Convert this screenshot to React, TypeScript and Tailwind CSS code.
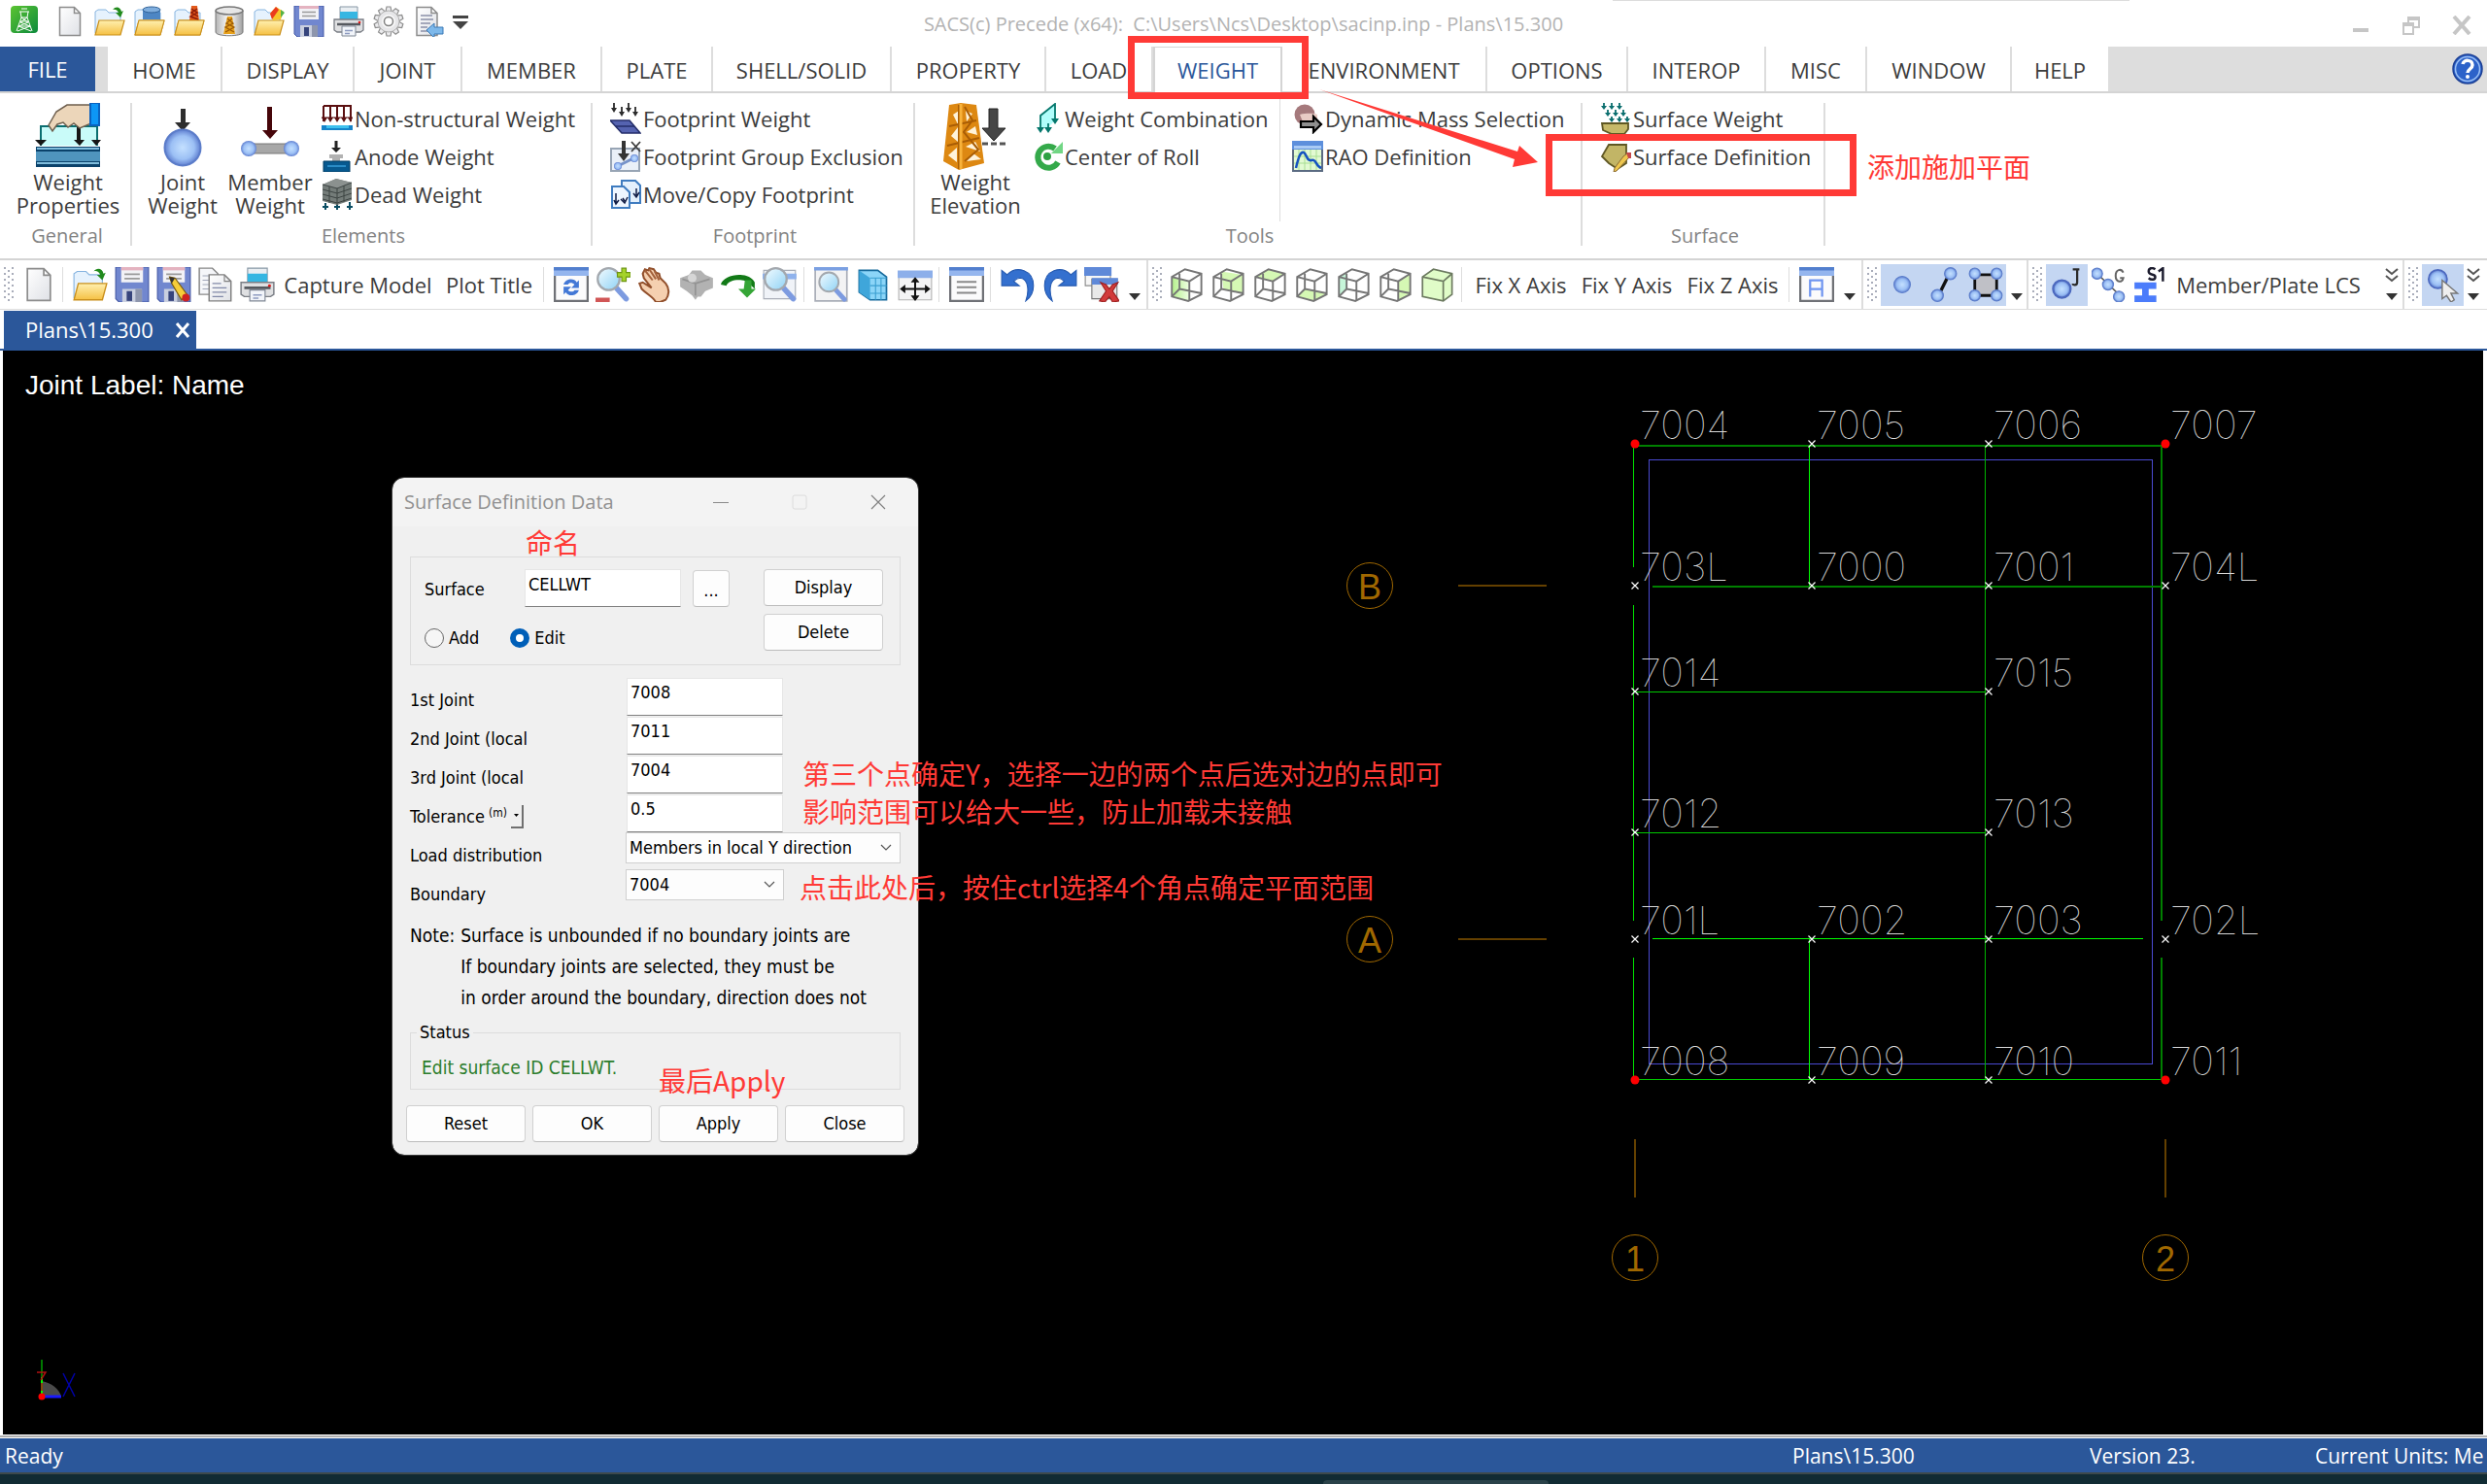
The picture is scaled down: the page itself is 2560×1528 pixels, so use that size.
import type { ReactNode } from "react";
import clsx from "clsx";

const TAHOMA = "font-['DejaVu_Sans_Condensed','DejaVu_Sans',sans-serif]";

interface IconProps {
  children: ReactNode;
  className?: string;
  box?: string;
}

function Icon({ children, className = "size-8", box = "0 0 32 32" }: IconProps) {
  return (
    <svg viewBox={box} className={clsx("shrink-0", className)} aria-hidden="true" fill="none">
      {children}
    </svg>
  );
}

/* ---------- shared gradients ---------- */

function Gradients() {
  return (
    <svg className="absolute size-0" aria-hidden="true">
      <defs>
        <linearGradient id="paper" x1="0" y1="0" x2="1" y2="1">
          <stop offset="0" stopColor="#ffffff" />
          <stop offset="1" stopColor="#dfe1e6" />
        </linearGradient>
        <linearGradient id="folder" x1="0" y1="0" x2="0" y2="1">
          <stop offset="0" stopColor="#fff0b0" />
          <stop offset="1" stopColor="#f5c043" />
        </linearGradient>
        <linearGradient id="lens" x1="0" y1="0" x2="1" y2="1">
          <stop offset="0" stopColor="#f2fbff" />
          <stop offset="1" stopColor="#8fd2f5" />
        </linearGradient>
        <radialGradient id="ball">
          <stop offset="0" stopColor="#c4e0ff" />
          <stop offset="0.65" stopColor="#9cc0f5" />
          <stop offset="1" stopColor="#5f7fd0" />
        </radialGradient>
        <linearGradient id="can" x1="0" y1="0" x2="1" y2="0">
          <stop offset="0" stopColor="#b5b5b5" />
          <stop offset="0.5" stopColor="#ffffff" />
          <stop offset="1" stopColor="#a0a0a0" />
        </linearGradient>
        <linearGradient id="app" x1="0" y1="0" x2="1" y2="1">
          <stop offset="0" stopColor="#5cc431" />
          <stop offset="1" stopColor="#0c8a3c" />
        </linearGradient>
        <linearGradient id="lime" x1="0" y1="0" x2="1" y2="0">
          <stop offset="0" stopColor="#b4f08c" />
          <stop offset="1" stopColor="#f0ffe4" />
        </linearGradient>
      </defs>
    </svg>
  );
}

/* ---------- icon drawings, 32 x 32 ---------- */

const page = (
  <path d="M4 1.500h15l6 6v23H4z M19 1.500v6h6" fill="url(#paper)" stroke="#8c8c8c" strokeWidth="1.500" />
);

const folder = (
  <>
    <path d="M1 28V6l3-2h8l3 3h12v21z" fill="#e6f2fd" stroke="#86b4e0" />
    <path d="M5 15h26l-4 15H1z" fill="url(#folder)" stroke="#c98f1b" strokeWidth="1.200" />
  </>
);

const NewFile = <g transform="translate(1.500 0)">{page}</g>;

const OpenFile = (
  <>
    {folder}
    <path d="M19 4c3-4 8-3 9 2l2-1-3 7-5-5 3 0c-1-3-4-4-6-3z" fill="#218a1d" />
  </>
);

const OpenDatabase = (
  <>
    {folder}
    <path d="M9 4v10h18V4z" fill="#4d86c4" />
    <ellipse cx="18" cy="4" rx="9" ry="3" fill="#7faede" stroke="#2f6197" />
    <path d="M5 15h26l-4 15H1z" fill="url(#folder)" stroke="#c98f1b" />
  </>
);

const OpenTower = (
  <>
    {folder}
    <path d="M18 0h6l2 15H16z" fill="#e2591b" />
    <path d="M18 3l6 4-7 4 8 3M24 3l-6 4 7 4" stroke="#8c1b0a" strokeWidth="1.400" />
    <path d="M5 15h26l-4 15H1z" fill="url(#folder)" stroke="#c98f1b" />
  </>
);

const Tank = (
  <>
    <path d="M2 5v22c0 5 28 5 28 0V5z" fill="url(#can)" stroke="#777777" />
    <ellipse cx="16" cy="5" rx="14" ry="4" fill="#e6e6e6" stroke="#777777" strokeWidth="1.500" />
    <path d="M14 11h5l3 18H10z" fill="#e8a21c" />
    <path d="M14 13l6 5-8 4 9 5M19 13l-6 5 8 4-9 5" stroke="#9c5a06" strokeWidth="1.300" />
  </>
);

const OpenColor = (
  <>
    {folder}
    <path d="M17 8l6-7 8 5-3 8-8 1z" fill="#f7c52b" />
    <path d="M17 8l6-7 3 3-7 10z" fill="#ea3a1e" />
    <path d="M28 4l4 3-4 5z" fill="#54b348" />
  </>
);

const floppy = (
  <>
    <path d="M1 0h30v32H4l-3-3z" fill="#7187cf" stroke="#4257a5" />
    <path d="M6 0h20v14H6z" fill="#f2f2f6" />
    <path d="M6 0h20v3H6z" fill="#e4b3c0" />
    <path d="M9 6.500h14M9 10.500h14" stroke="#9a9a9a" strokeWidth="1.500" />
    <path d="M7 20h18v12H7z" fill="#c9cfdf" />
    <path d="M11 22h5v9h-5z" fill="#36447c" />
    <path d="M19 20h6v12h-6z" fill="#8e96ad" />
  </>
);

const SaveAs = (
  <>
    {floppy}
    <path d="M12 9l5 1 11 15-5 5-9-15z" fill="#f6cd3a" stroke="#7a5b0c" />
    <path d="M12 9l5 1-3 5z" fill="#333333" />
    <circle cx="27" cy="28" r="3.500" fill="#cf2222" />
  </>
);

const Printer = (
  <>
    <path d="M7 1h18v13H7z" fill="#e9eef2" stroke="#8797a5" />
    <path d="M7 6h18v8H7z" fill="#35b6e2" />
    <path d="M1 14h30v11l-3 2H4l-3-2z" fill="#dfe0e2" stroke="#7a7e85" strokeWidth="1.300" />
    <path d="M4 19h24" stroke="#55595f" strokeWidth="2.500" />
    <path d="M9 21h14v10H9z" fill="#f2f5fa" stroke="#7f8794" />
    <path d="M12 25.500h8M12 28.500h5" stroke="#8d9bc0" strokeWidth="1.300" />
    <circle cx="27" cy="17" r="1.300" fill="#e01b1b" />
  </>
);

const toothAngles = [0, 36, 72, 108, 144, 180, 216, 252, 288, 324];

const Gear = (
  <>
    {toothAngles.map((angle) => (
      <path
        key={angle}
        d="M13 6l1-5h4l1 5z"
        transform={`rotate(${angle} 16 16)`}
        fill="#ececee"
        stroke="#8e8e8e"
        strokeWidth="1.200"
      />
    ))}
    <circle cx="16" cy="16" r="11" fill="#e6e6e8" stroke="#a4a4a4" strokeWidth="0.800" />
    <circle cx="16" cy="16" r="6" stroke="#f8f8f8" strokeWidth="2" />
    <circle cx="16" cy="16" r="4.500" fill="#ffffff" stroke="#808080" strokeWidth="1.500" />
  </>
);

const ImportDoc = (
  <>
    {page}
    <path d="M8 10h12M8 14h13M8 18h10M8 22h7M8 26h7" stroke="#8a90a8" strokeWidth="1.500" />
    <path d="M14 25l8-7v4h9v7h-9v4z" fill="#7db8ea" stroke="#3a78b5" />
  </>
);

const CopyDoc = (
  <>
    <path d="M1 1h12l5 5v19H1z" fill="#f5f6f9" stroke="#888888" strokeWidth="1.300" />
    <path d="M4 8h6M4 12h6M4 16h6M4 20h6" stroke="#a0a6b8" />
    <path d="M10 7h14l6 6v18H10z" fill="url(#paper)" stroke="#808080" strokeWidth="1.300" />
    <path d="M24 7v6h6" stroke="#808080" />
    <path d="M13 15h8M13 19h13M13 23h13M13 27h10" stroke="#8189a8" strokeWidth="1.300" />
  </>
);

const frame = (
  <>
    <path d="M1 1h30v30H1z" fill="#fbfbfc" stroke="#6f7176" strokeWidth="2" />
    <path d="M0 0h32v8H0z" fill="#94b5ee" />
    <path d="M0 0h32v3H0z" fill="#527fce" />
  </>
);

const Refresh = (
  <>
    {frame}
    <path d="M9 16c2-6 10-6 12-2l2-2v7h-7l3-3c-2-2-5-2-6 0zM23 21c-2 6-10 6-12 2l-2 2v-7h7l-3 3c2 2 5 2 6 0z" fill="#4378d6" />
  </>
);

const lens = (
  <>
    <path d="M19 19l9 10" stroke="#7d9be0" strokeWidth="5" strokeLinecap="round" />
    <circle cx="12" cy="11" r="10" fill="url(#lens)" stroke="#a3a8ae" strokeWidth="2" />
  </>
);

const ZoomInOut = (
  <>
    {lens}
    <path d="M24 1h4v4h4v4h-4v4h-4V9h-4V5h4z" fill="#a5d32a" stroke="#6d9612" />
    <path d="M0 28h13v4H0z" fill="#d15656" />
  </>
);

const Hand = (
  <>
    <path
      d="M5 6l2-4 3 1 1-2 4 1 2 3 3 1 1 4 5 5c4 5 3 11 0 15l-5 2h-4c-3-5-8-7-13-12l-2-5 3-1 8 5-7-9z"
      fill="#f5d0b0"
      stroke="#92502c"
      strokeWidth="1.800"
    />
    <path d="M7 3l7 9M11 2l6 9M16 4l4 8" stroke="#a4623c" strokeWidth="1.800" />
  </>
);

const RotateBall = (
  <>
    <path d="M1 10l8-3 3-4h8l4 4 7 3v9l-7 3-4 5h-3l-2 3-3-4-5-4-6-4z" fill="#b2b2b2" />
    <path d="M3 11l12 4 13-4M15 15v11" stroke="#939393" strokeWidth="1.500" />
    <circle cx="12" cy="10" r="4" fill="#d6d6d6" />
  </>
);

const Spin = (
  <>
    <path d="M0 16C2 6 26 3 31 14v6l-3-3C24 10 8 10 5 17z" fill="#127a17" />
    <path d="M22 14h6v8h4l-8 8-8-8h5z" fill="#35a536" transform="translate(0 -2)" />
  </>
);

const ZoomArea = (
  <>
    <path d="M1 3h29v26H1z" fill="#f0f3f8" stroke="#a9aeb8" />
    <path d="M0 6h31v5H0z" fill="#8fb2ec" />
    {lens}
  </>
);

const ZoomPage = (
  <>
    <path d="M1 1h29v30H1z" fill="#f3f3f4" stroke="#a9aeb8" strokeWidth="1.500" />
    <path d="M0 0h31v3H0z" fill="#7ba0e2" />
    <g transform="translate(3 4) scale(.88)">{lens}</g>
  </>
);

const BlueBlock = (
  <>
    <path d="M3 3h17l8 6v21H13L3 23z" fill="#8bd5f8" stroke="#176a9c" strokeWidth="1.500" />
    <path d="M3 3l10 7v20L3 23z" fill="#3fa6da" />
    <path d="M13 10h15M13 17h15M13 24h15M18 10v20M23 10v20" stroke="#3a9fd0" />
  </>
);

const PanWindow = (
  <>
    <path d="M1 5h30v25H1z" fill="#f4f4f5" stroke="#b3b3b3" />
    <path d="M0 3h32v7H0z" fill="#8dafea" />
    <path d="M16 12v18M4 20h24" stroke="#111111" strokeWidth="1.800" />
    <path d="M16 9l4 5h-8zM16 31l4-5h-8zM2 20l5-4v8zM30 20l-5-4v8z" fill="#111111" />
  </>
);

const ListWindow = (
  <>
    {frame}
    <path d="M7 13.500h18M7 18.500h18M7 23.500h18" stroke="#8a8a8a" strokeWidth="1.800" />
  </>
);

const Undo = (
  <path d="M1 3l5 4c9-9 24-4 24 10 0 6-3 11-7 14 3-8 3-20-5-21-3 0-4 1-6 3l5 4H1z" fill="#3470cf" stroke="#2459b0" />
);

const CloseWindows = (
  <>
    <path d="M1 1h23v16H1z" fill="#f6f6f6" stroke="#8c8c8c" />
    <path d="M0 0h25v8H0z" fill="#5f89d8" />
    <path d="M7 11h23v18H7z" fill="#e9e9e9" stroke="#777777" />
    <path d="M7 10h24v6H7z" fill="#5f89d8" />
    <path d="M15 14l5 2 3 4 3-4 5-2-5 8 6 9-6 1-3-5-4 5-5-1 6-9z" fill="#d23b3b" stroke="#9d2020" />
  </>
);

interface CubeProps {
  face?: string;
  fill?: string;
}

function Cube({ face, fill = "#d5f8b4" }: CubeProps) {
  return (
    <Icon className="size-9">
      {face && <path d={face} fill={fill} />}
      <path
        d="M2 9l12-7 15 4v19l-12 6-15-4zM2 9l16 4 11-7M18 13v18M9 6v14l20 4M9 20l-7 7"
        stroke="#757575"
        strokeWidth="1.700"
      />
    </Icon>
  );
}

const PlotWindow = (
  <>
    {frame}
    <path d="M10 27V12h11v15M10 20h11" stroke="#6f95f0" strokeWidth="2" />
  </>
);

const SelectJoint = <circle cx="16" cy="16" r="7.500" fill="url(#ball)" stroke="#5c7ecb" />;

const SelectMember = (
  <>
    <path d="M12 24l8-16" stroke="#111111" strokeWidth="3" />
    <circle cx="22" cy="6" r="5.500" fill="url(#ball)" stroke="#5c7ecb" />
    <circle cx="10" cy="26" r="5.500" fill="url(#ball)" stroke="#5c7ecb" />
  </>
);

const SelectPlate = (
  <>
    <path d="M6 7h20v19H6z" fill="#bfc0c6" stroke="#111111" strokeWidth="2.500" />
    <circle cx="6" cy="6" r="5" fill="url(#ball)" stroke="#5c7ecb" />
    <circle cx="26" cy="6" r="5" fill="url(#ball)" stroke="#5c7ecb" />
    <circle cx="6" cy="26" r="5" fill="url(#ball)" stroke="#5c7ecb" />
    <circle cx="26" cy="26" r="5" fill="url(#ball)" stroke="#5c7ecb" />
  </>
);

const JointLabel = (
  <>
    <circle cx="11" cy="20" r="8" fill="url(#ball)" stroke="#4c69bf" strokeWidth="2" />
    <path d="M21 2h6M25 2v12c0 3-4 3-4 1" stroke="#2b2b2b" strokeWidth="2" />
  </>
);

const GroupLabel = (
  <>
    <path d="M5 6l21 20" stroke="#555555" strokeWidth="1.500" />
    <circle cx="5" cy="6" r="5" fill="url(#ball)" stroke="#5c7ecb" />
    <circle cx="15" cy="16" r="5" fill="url(#ball)" stroke="#5c7ecb" />
    <circle cx="25" cy="27" r="5" fill="url(#ball)" stroke="#5c7ecb" />
    <path d="M29 5c-2-4-7-3-7 3s6 7 7 2h-3" stroke="#666666" strokeWidth="1.800" />
  </>
);

const SectionLabel = (
  <>
    <path d="M1 14h20v6h-7v6h7v6H1v-6h7v-6H1z" fill="#4b7cfb" />
    <path d="M20 2c-3-2-6-1-6 2 0 4 6 2 6 5s-4 3-6 1M23 4l4-3v12" stroke="#1c1c2e" strokeWidth="2.200" />
  </>
);

const PickJoint = (
  <>
    <circle cx="11" cy="11" r="8.500" fill="url(#ball)" stroke="#4c69bf" strokeWidth="1.500" />
    <path d="M15 12v17l4-3 4 6 3-2-3-6h6z" fill="#efefef" stroke="#777777" strokeWidth="1.300" />
  </>
);

/* ---------- ribbon drawings ---------- */

const arrowDown = "M-1.500 0h3v7h3.500L0 12-5 7h3.500z";

const NonStructural = (
  <>
    <path d="M2 3h28v16M2 3v16M9 3v15M16 3v15M23 3v15" stroke="#5a0f10" strokeWidth="2" />
    <path d="M0 15h6l-3 5zM6 15h6l-3 5zM13 15h6l-3 5zM20 15h6l-3 5zM27 15h5l-2 5z" fill="#5a0f10" />
    <path d="M0 15h32" stroke="#5a0f10" />
    <path d="M0 23h32v5H0z" fill="#1583c9" />
    <path d="M5 23h23v3H5z" fill="#3fc1ee" />
  </>
);

const Anode = (
  <>
    <path d={arrowDown} transform="translate(15 0)" fill="#222222" />
    <path d="M8 14h14v4h-3v4h-8v-4H8z" fill="#b2b2b2" />
    <path d="M2 21h27v11H2z" fill="#07598f" stroke="#033c63" />
    <path d="M6 26h19" stroke="#2a8cc6" strokeWidth="2" />
  </>
);

const DeadLoad = (
  <>
    <path d="M1 6l14-6 16 4v18l-15 5L1 23z" fill="#747c79" />
    <path d="M1 6l14-6 16 4-15 6z" fill="#8b918f" />
    <path d="M1 6l15 4v17M16 10l15-6M1 11l15 4 15-5M1 16l15 4 15-5M1 21l15 4 15-5M8 8v17M23 7v17" stroke="#3d4443" />
    <path d="M4 25v7M16 27v5M29 24v8M1 29h6M13 29h6M26 29h6" stroke="#0a4d63" strokeWidth="2" />
  </>
);

const FootprintLoad = (
  <>
    <path d="M4 0v8M12 4v8M19 0v8M26 4v8" stroke="#2b2b2b" strokeWidth="1.800" />
    <path d="M1 5h6l-3 5zM9 9h6l-3 5zM16 5h6l-3 5zM23 9h6l-3 5z" fill="#2b2b2b" />
    <path d="M0 18h20l11 13H12z" fill="#5563b0" stroke="#232d69" strokeWidth="1.500" />
    <path d="M6 24h19" stroke="#232d69" strokeWidth="1.500" />
  </>
);

const FootprintExclude = (
  <>
    <path d="M1 8h29v23H1z" fill="#eaf0f8" stroke="#98a5b5" strokeWidth="2" />
    <path d="M8 26l16-8" stroke="#7692c8" strokeWidth="3" />
    <circle cx="8" cy="26" r="4" fill="url(#ball)" />
    <circle cx="25" cy="18" r="4" fill="url(#ball)" />
    <path d="M12 0h4v13h4l-6 8-6-8h4z" fill="#343434" />
    <path d="M22 1l9 10M31 1l-9 10" stroke="#3d3d3d" strokeWidth="1.800" />
  </>
);

const FootprintCopy = (
  <>
    <path d="M12 2h14l5 5v18H12z" fill="#e4f0fc" stroke="#3f7cc0" strokeWidth="2" />
    <path d="M2 8h12l6 6v16H2z" fill="#eef6ff" stroke="#3f7cc0" strokeWidth="2" />
    <path d="M6 15v10M13 20l2 3M27 10v7M4 22l2 4 3-4M11 21l4 4 3-6M24 15l3 4 3-5" stroke="#111c44" strokeWidth="1.500" />
  </>
);

const Combination = (
  <>
    <path d="M9 13L24 1v17l-7 7H9z" fill="#b0fdfb" />
    <path d="M9 27V13L24 1v18M17 21v7" stroke="#04776c" strokeWidth="1.800" />
    <path d="M5 25h8l-4 6zM13 25h8l-4 6zM20 16h8l-4 6z" fill="#04776c" />
  </>
);

const Roll = (
  <>
    <path d="M24 8A11 11 0 1 0 27 22" stroke="#34a94a" strokeWidth="6" />
    <path d="M20 13h12V1z" fill="#71d684" />
    <circle cx="16" cy="16" r="4" fill="#2ca143" />
  </>
);

const MassSelect = (
  <>
    <circle cx="13" cy="12" r="10.500" fill="#a5797c" />
    <path d="M8 12c8-2 16-1 18 0v10H12z" fill="#e9cbc5" />
    <path d="M9 19h13v-5l8 8-8 8v-5H9z" fill="#8f8f8f" stroke="#000000" strokeWidth="2.200" />
  </>
);

const Rao = (
  <>
    <path d="M1 1h30v30H1z" fill="#e2fad2" stroke="#5b6b82" strokeWidth="2" />
    <path d="M0 0h32v9H0z" fill="#5d8fdc" />
    <path d="M2 5h28v3H2z" fill="#aacbf5" />
    <path d="M7 9v21M13 9v21M19 9v21M25 9v21M2 16h28M2 23h28" stroke="#a9de94" />
    <path d="M4 28C7 15 9 11 12 12s3 10 8 8 4 6 10 8" stroke="#1553c0" strokeWidth="2.500" />
  </>
);

const SurfaceLoad = (
  <>
    <path d="M4 0v5M12 0v5M20 0v5M8 7v5M16 7v5M24 7v5M12 14v5M20 14v5M28 14v5" stroke="#0a6e6e" strokeWidth="1.800" />
    <path d="M1 3h6l-3 4zM9 3h6l-3 4zM17 3h6l-3 4zM5 10h6l-3 4zM13 10h6l-3 4zM21 10h6l-3 4zM9 16h6l-3 4zM17 16h6l-3 4zM25 16h6l-3 4z" fill="#0a6e6e" />
    <path d="M2 21h27v6l-4 5H12l-9-4z" fill="#c6b969" stroke="#5f5723" strokeWidth="1.800" />
  </>
);

const SurfaceEdit = (
  <>
    <path d="M9 4h18v19l-9 6-9-6-7-7z" fill="#c2b566" stroke="#5f5723" strokeWidth="1.800" />
    <path d="M24 16l4-3 3 3-14 15-3 1 1-4z" fill="#eec74e" stroke="#8a6a31" />
    <path d="M27 12h5v6h-3z" fill="#c5484a" />
  </>
);

const WeightProps = (
  <Icon className="h-[66px] w-[68px]" box="0 0 68 66">
    <path d="M6 24h58v20H6z" fill="#c9fbf9" />
    <path d="M6 44V24h58v20" stroke="#0b6e70" strokeWidth="2" />
    <path d="M0 38h12l-6 6zM58 38h10l-5 6zM40 38h11l-5 6z" fill="#161616" />
    <path d="M45 22v18" stroke="#161616" strokeWidth="4" />
    <path d="M1 45h66v21H1z" fill="#4f94bd" />
    <path d="M1 45h66v5H1zM1 60h66v6H1z" fill="#0a416a" />
    <path d="M2 46h64v2H2zM2 61h64v2H2z" fill="#7fbcdc" />
    <path d="M14 23l8-14L33 2h25v19l-12 5-6-5-6 4-5-5-6 2-5 7z" fill="#ecd6ba" stroke="#6e5f4e" strokeWidth="1.500" />
    <path d="M57 0h9v23h-9z" fill="#0d96f6" stroke="#0b62c0" strokeWidth="2" />
  </Icon>
);

const JointWeight = (
  <Icon className="h-[66px] w-[42px]" box="0 0 42 66">
    <path d="M19 6h5v14h5l-8 9-8-9h6z" fill="#2d2d2d" />
    <circle cx="21" cy="46" r="18.500" fill="url(#ball)" stroke="#5b7cc9" strokeWidth="2" />
  </Icon>
);

const MemberWeight = (
  <Icon className="h-[66px] w-[62px]" box="0 0 62 66">
    <path d="M28 4h5v24h6l-8 9-8-9h5z" fill="#46060a" />
    <path d="M12 42h38v10H12z" fill="#a7a7a7" stroke="#777777" />
    <circle cx="9" cy="47" r="8" fill="url(#ball)" />
    <circle cx="53" cy="47" r="8" fill="url(#ball)" />
  </Icon>
);

const WeightElevation = (
  <Icon className="h-[70px] w-[66px]" box="0 0 66 70">
    <path d="M6 2l12-2 16 2 8 60-26 7L0 60z" fill="#dd8812" />
    <path d="M10 12l6-4-1 14zM8 34l7-9v15zM5 54l9-8v15zM23 8l7 3-6 8zM24 30l9-6 2 9zM23 45l10-5 5 10zM24 60l7-8 8 6z" fill="#fff3da" />
    <path d="M16 2v66M6 24l28-6M4 44l33-8M22 4l8 14-9 12 15 18-14 12" stroke="#a95d05" strokeWidth="2" />
    <path d="M18 1v67" stroke="#f8b23a" strokeWidth="3" />
    <path d="M47 6h9v20h8L52 39 40 26h7z" fill="#464646" stroke="#222222" />
    <path d="M40 42h24" stroke="#555555" strokeWidth="3" strokeDasharray="6 3" />
  </Icon>
);

/* ---------- title bar ---------- */

const quickAccess = [
  { label: "New", icon: NewFile },
  { label: "Open", icon: OpenFile },
  { label: "Open database", icon: OpenDatabase },
  { label: "Open structure", icon: OpenTower },
  { label: "Results", icon: Tank },
  { label: "Open output", icon: OpenColor },
  { label: "Save", icon: floppy },
  { label: "Print", icon: Printer },
  { label: "Settings", icon: Gear },
  { label: "Import", icon: ImportDoc }
];

function TitleBar() {
  return (
    <header className="relative flex h-12 shrink-0 items-center bg-white pl-[11px]">
      <Icon className="mb-2 size-7" box="0 0 28 28">
        <rect width="28" height="28" rx="4" fill="url(#app)" />
        <path d="M11 3h6M9 6h10M10 6l1 6h6l1-6M11 12L6 26M17 12l5 14M10 16h8M8 21h12M11 12l7 5-10 4 13 5M17 12l-7 5 10 4-13 5" stroke="#ffffff" />
      </Icon>
      <div className="ml-[17px] flex gap-[9px] pb-1">
        {quickAccess.map((item) => (
          <button key={item.label} type="button" aria-label={item.label}>
            <Icon>{item.icon}</Icon>
          </button>
        ))}
        <button type="button" aria-label="Customize" className="flex items-center">
          <Icon className="size-4" box="0 0 16 16">
            <path d="M0 2h16v3H0zM0 8h16l-8 8z" fill="#444444" />
          </Icon>
        </button>
      </div>
      <h1 className="absolute inset-x-0 pt-0.5 text-center text-xl whitespace-pre text-[#b3b3b3]">
        SACS(c) Precede (x64):{"  "}C:\Users\Ncs\Desktop\sacinp.inp - Plans\15.300
      </h1>
      <div className="relative ml-auto flex items-center gap-8 pt-1 pr-4 text-[#c6c6c6]">
        <button type="button" aria-label="Minimize">
          <Icon className="size-5" box="0 0 20 20">
            <path d="M2 13h16v4H2z" fill="currentColor" />
          </Icon>
        </button>
        <button type="button" aria-label="Restore">
          <Icon className="size-5" box="0 0 20 20">
            <path d="M7 7V2h11v10h-5" stroke="currentColor" strokeWidth="2" />
            <path d="M6 1h13v4H6zM1 7h12v4H1z" fill="currentColor" />
            <path d="M2 9h10v10H2z" stroke="currentColor" strokeWidth="2" />
          </Icon>
        </button>
        <button type="button" aria-label="Close">
          <Icon className="size-5" box="0 0 20 20">
            <path d="M2 1l16 18M18 1L2 19" stroke="currentColor" strokeWidth="4" />
          </Icon>
        </button>
      </div>
      <div className="absolute top-0 right-[368px] h-px w-[532px] bg-[#dcdcdc] shadow-md" />
    </header>
  );
}

/* ---------- ribbon tabs ---------- */

const tabs = [
  { label: "HOME", width: "w-[118px]" },
  { label: "DISPLAY", width: "w-[136px]" },
  { label: "JOINT", width: "w-[111px]" },
  { label: "MEMBER", width: "w-[144px]" },
  { label: "PLATE", width: "w-[114px]" },
  { label: "SHELL/SOLID", width: "w-[184px]" },
  { label: "PROPERTY", width: "w-[159px]" },
  { label: "LOAD", width: "w-[110px]" },
  { label: "WEIGHT", width: "w-[133px]" },
  { label: "ENVIRONMENT", width: "w-[211px]" },
  { label: "OPTIONS", width: "w-[145px]" },
  { label: "INTEROP", width: "w-[142px]" },
  { label: "MISC", width: "w-[104px]" },
  { label: "WINDOW", width: "w-[149px]" },
  { label: "HELP", width: "w-[101px]" }
];

function RibbonTabs() {
  return (
    <nav className="flex h-12 shrink-0 border-b-2 border-[#d4d4d4] bg-[#dddddd] text-[22px] text-[#3c3c3c]" aria-label="Ribbon">
      <button type="button" className="mr-[13px] w-[98px] bg-[#2b579a] text-white">
        FILE
      </button>
      {tabs.map((tab) => (
        <button
          key={tab.label}
          type="button"
          className={clsx(
            "shrink-0 bg-white whitespace-nowrap",
            tab.width,
            tab.label === "WEIGHT"
              ? "-mb-0.5 border-x-2 border-t border-[#d4d4d4] pt-0.5 pb-0.5 text-[#2b579a]"
              : "border-r-2 border-[#dddddd] pt-[3px]"
          )}
        >
          {tab.label}
        </button>
      ))}
      <button type="button" aria-label="Help topics" className="mr-1 ml-auto">
        <Icon>
          <circle cx="16" cy="16" r="15" fill="#2c62c9" stroke="#1c3f94" strokeWidth="1.500" />
          <circle cx="16" cy="16" r="12.500" stroke="#9cc1f5" strokeWidth="1.500" />
          <path d="M11 11c1-5 10-5 10 1 0 4-5 4-5 8" stroke="#ffffff" strokeWidth="3.500" />
          <circle cx="16" cy="24" r="2" fill="#ffffff" />
        </Icon>
      </button>
    </nav>
  );
}

/* ---------- ribbon ---------- */

interface LargeButtonProps {
  icon: ReactNode;
  lines: [string, string];
  className: string;
}

function LargeButton({ icon, lines, className }: LargeButtonProps) {
  return (
    <button type="button" className={clsx("flex shrink-0 flex-col items-center", className)}>
      <span className="flex h-[69px] items-start">{icon}</span>
      <span className="whitespace-nowrap">{lines[0]}</span>
      <span className="whitespace-nowrap">{lines[1]}</span>
    </button>
  );
}

interface SmallButtonProps {
  icon: ReactNode;
  label: string;
}

function SmallButton({ icon, label }: SmallButtonProps) {
  return (
    <button type="button" className="flex h-[39px] items-center gap-0.5 whitespace-nowrap">
      <Icon>{icon}</Icon>
      {label}
    </button>
  );
}

interface GroupProps {
  title: string;
  className: string;
  children: ReactNode;
}

function Group({ title, className, children }: GroupProps) {
  return (
    <section className={clsx("flex shrink-0 flex-col border-r-2 border-[#dddddd]", className)}>
      <div className="flex flex-1 items-start">{children}</div>
      <h2 className="pl-1 text-center text-xl leading-5 text-[#838383]">{title}</h2>
    </section>
  );
}

function Ribbon() {
  return (
    <div className="flex h-[172px] shrink-0 border-b-2 border-[#d4d4d4] bg-white pt-[10px] pb-[13px] text-[22px] leading-6 text-[#3c3c3c]">
      <Group title="General" className="w-[136px]">
        <LargeButton icon={WeightProps} lines={["Weight", "Properties"]} className="ml-1 w-[132px]" />
      </Group>
      <Group title="Elements" className="w-[474px]">
        <LargeButton icon={JointWeight} lines={["Joint", "Weight"]} className="ml-[6px] w-[92px]" />
        <LargeButton icon={MemberWeight} lines={["Member", "Weight"]} className="w-[88px]" />
        <div className="-mt-1 ml-[9px]">
          <SmallButton icon={NonStructural} label="Non-structural Weight" />
          <SmallButton icon={Anode} label="Anode Weight" />
          <SmallButton icon={DeadLoad} label="Dead Weight" />
        </div>
      </Group>
      <Group title="Footprint" className="w-[332px]">
        <div className="-mt-1 ml-[18px]">
          <SmallButton icon={FootprintLoad} label="Footprint Weight" />
          <SmallButton icon={FootprintExclude} label="Footprint Group Exclusion" />
          <SmallButton icon={FootprintCopy} label="Move/Copy Footprint" />
        </div>
      </Group>
      <Group title="Tools" className="w-[687px]">
        <LargeButton icon={WeightElevation} lines={["Weight", "Elevation"]} className="ml-[12px] w-[100px]" />
        <div className="-mt-1 ml-[8px] h-[126px] w-[256px] shrink-0 border-r border-[#dddddd]">
          <SmallButton icon={Combination} label="Weight Combination" />
          <SmallButton icon={Roll} label="Center of Roll" />
        </div>
        <div className="-mt-1 ml-[12px]">
          <SmallButton icon={MassSelect} label="Dynamic Mass Selection" />
          <SmallButton icon={Rao} label="RAO Definition" />
        </div>
      </Group>
      <Group title="Surface" className="w-[250px]">
        <div className="-mt-1 ml-[18px]">
          <SmallButton icon={SurfaceLoad} label="Surface Weight" />
          <SmallButton icon={SurfaceEdit} label="Surface Definition" />
        </div>
      </Group>
    </div>
  );
}

/* ---------- toolbar ---------- */

function Grip() {
  return (
    <span className="flex w-[18px] shrink-0 justify-center">
      <Icon className="h-9 w-[10px]" box="0 0 10 36">
        <path d="M1 0v36M9 0v36" stroke="#a9adba" strokeWidth="2" strokeDasharray="2 4" />
        <path d="M5 3v33" stroke="#a9adba" strokeWidth="2" strokeDasharray="2 4" />
      </Icon>
    </span>
  );
}

function Separator() {
  return <span className="mr-[6px] ml-[3px] h-9 w-px shrink-0 bg-[#dddddd]" />;
}

interface ToolProps {
  label: string;
  children: ReactNode;
  active?: boolean;
}

function Tool({ label, children, active = false }: ToolProps) {
  return (
    <button
      type="button"
      aria-label={label}
      className={clsx("flex h-[43px] w-[43px] shrink-0 items-center justify-center", active && "bg-[#c4d6f2]")}
    >
      {children}
    </button>
  );
}

function Caret({ className, chevrons = false }: { className: string; chevrons?: boolean }) {
  return (
    <button type="button" aria-label="More" className={clsx("flex shrink-0 items-end justify-center", className)}>
      <Icon className="h-9 w-4" box="0 0 16 36">
        {chevrons && <path d="M2 2l6 5 6-5M2 9l6 5 6-5" stroke="#555555" strokeWidth="2" />}
        <path d="M2 27h12l-6 7z" fill="#333333" />
      </Icon>
    </button>
  );
}

function TextTool({ label, width }: { label: string; width: string }) {
  return (
    <button type="button" className={clsx("shrink-0 text-center whitespace-nowrap", width)}>
      {label}
    </button>
  );
}

const fileTools = [
  { label: "Open", icon: OpenFile },
  { label: "Save", icon: floppy },
  { label: "Save as", icon: SaveAs },
  { label: "Copy", icon: CopyDoc },
  { label: "Print", icon: Printer }
];

const viewTools = [
  { label: "Refresh", icon: Refresh },
  { label: "Zoom in or out", icon: ZoomInOut },
  { label: "Pan", icon: Hand },
  { label: "Rotate", icon: RotateBall },
  { label: "Spin", icon: Spin },
  { label: "Zoom window", icon: ZoomArea }
];

const windowTools = [
  { label: "Zoom all", icon: ZoomPage },
  { label: "3D view", icon: BlueBlock },
  { label: "Move window", icon: PanWindow }
];

const cubeFaces = [
  { label: "Front", face: "M2 9l16 4v18l-16-4z", fill: "url(#lime)" },
  { label: "Back", face: "M9 4l20 3v17l-18-4z" },
  { label: "Top", face: "M2 9l12-7 15 4-11 7z" },
  { label: "Bottom", face: "M2 27l7-7 20 4-12 7z" },
  { label: "Left", face: "M2 9l7-4v15l-7 7z", fill: "#c6f5d9" },
  { label: "Right", face: "M18 13l11-7v19l-11 6z" }
];

function Toolbar() {
  const section = "flex shrink-0 items-center border-r-2 border-[#dddddd]";
  return (
    <div className="flex h-[51px] shrink-0 border-b border-[#dddddd] bg-white text-[22px] text-[#3c3c3c]">
      <div className={section}>
        <Grip />
        <Tool label="New">
          <Icon className="size-9">{NewFile}</Icon>
        </Tool>
        <Separator />
        {fileTools.map((tool) => (
          <Tool key={tool.label} label={tool.label}>
            <Icon className="size-9">{tool.icon}</Icon>
          </Tool>
        ))}
        <TextTool label="Capture Model" width="w-[165px]" />
        <TextTool label="Plot Title" width="w-[105px]" />
        <Separator />
        {viewTools.map((tool) => (
          <Tool key={tool.label} label={tool.label}>
            <Icon className="size-9">{tool.icon}</Icon>
          </Tool>
        ))}
        <Separator />
        {windowTools.map((tool) => (
          <Tool key={tool.label} label={tool.label}>
            <Icon className="size-9">{tool.icon}</Icon>
          </Tool>
        ))}
        <Separator />
        <Tool label="Details">
          <Icon className="size-9">{ListWindow}</Icon>
        </Tool>
        <Separator />
        <Tool label="Undo">
          <Icon className="size-9">{Undo}</Icon>
        </Tool>
        <Tool label="Redo">
          <Icon className="size-9">
            <g transform="matrix(-1 0 0 1 32 0)">{Undo}</g>
          </Icon>
        </Tool>
        <Tool label="Close windows">
          <Icon className="size-9">{CloseWindows}</Icon>
        </Tool>
        <Caret className="w-[25px]" />
      </div>
      <div className={section}>
        <Grip />
        {cubeFaces.map((cube) => (
          <Tool key={cube.label} label={cube.label}>
            <Cube face={cube.face} fill={cube.fill} />
          </Tool>
        ))}
        <Tool label="Isometric">
          <Icon className="size-9">
            <path d="M2 9l10-7 17 4v19l-8 6-19-4z" fill="#e0fcc8" stroke="#6c7a60" strokeWidth="1.500" />
            <path d="M2 9l19 4 8-7M21 13v18" stroke="#6c7a60" strokeWidth="1.500" />
          </Icon>
        </Tool>
        <Separator />
        <TextTool label="Fix X Axis" width="w-[109px]" />
        <TextTool label="Fix Y Axis" width="w-[109px]" />
        <TextTool label="Fix Z Axis" width="w-[109px]" />
        <Separator />
        <Tool label="Plot view">
          <Icon className="size-9">{PlotWindow}</Icon>
        </Tool>
        <Caret className="w-[25px]" />
      </div>
      <div className={section}>
        <Grip />
        <Tool label="Joints" active>
          <Icon className="size-9">{SelectJoint}</Icon>
        </Tool>
        <Tool label="Members" active>
          <Icon className="size-9">{SelectMember}</Icon>
        </Tool>
        <Tool label="Plates" active>
          <Icon className="size-9">{SelectPlate}</Icon>
        </Tool>
        <Caret className="w-[21px]" />
      </div>
      <div className={section}>
        <Grip />
        <Tool label="Joint labels" active>
          <Icon className="size-9">{JointLabel}</Icon>
        </Tool>
        <Tool label="Group labels">
          <Icon className="size-9">{GroupLabel}</Icon>
        </Tool>
        <Tool label="Section labels">
          <Icon className="size-9">{SectionLabel}</Icon>
        </Tool>
        <TextTool label="Member/Plate LCS" width="w-[200px]" />
        <Caret className="ml-[15px] w-[23px]" chevrons />
      </div>
      <div className="flex shrink-0 items-center">
        <Grip />
        <Tool label="Pick joint" active>
          <Icon className="size-9">{PickJoint}</Icon>
        </Tool>
        <Caret className="w-[19px]" chevrons />
      </div>
    </div>
  );
}

function DocumentTabs() {
  return (
    <div className="flex h-[42px] shrink-0 border-b-2 border-[#2b579a] bg-white px-1 pt-px">
      <div className="flex w-[198px] items-center justify-between bg-[#2b579a] pr-[6px] pl-[22px] text-[22px] text-white">
        <span>Plans\15.300</span>
        <button type="button" aria-label="Close tab">
          <Icon className="size-4" box="0 0 16 16">
            <path d="M2 1l12 14M14 1L2 15" stroke="#ffffff" strokeWidth="3" />
          </Icon>
        </button>
      </div>
    </div>
  );
}

/* ---------- drawing canvas ---------- */

interface Joint {
  name: string;
  x: number;
  y: number;
  corner?: boolean;
}

const joints: Joint[] = [
  { name: "7004", x: 1680, y: 96, corner: true },
  { name: "7005", x: 1862, y: 96 },
  { name: "7006", x: 2044, y: 96 },
  { name: "7007", x: 2226, y: 96, corner: true },
  { name: "703L", x: 1680, y: 242 },
  { name: "7000", x: 1862, y: 242 },
  { name: "7001", x: 2044, y: 242 },
  { name: "704L", x: 2226, y: 242 },
  { name: "7014", x: 1680, y: 351 },
  { name: "7015", x: 2044, y: 351 },
  { name: "7012", x: 1680, y: 496 },
  { name: "7013", x: 2044, y: 496 },
  { name: "701L", x: 1680, y: 606 },
  { name: "7002", x: 1862, y: 606 },
  { name: "7003", x: 2044, y: 606 },
  { name: "702L", x: 2226, y: 606 },
  { name: "7008", x: 1680, y: 751, corner: true },
  { name: "7009", x: 1862, y: 751 },
  { name: "7010", x: 2044, y: 751 },
  { name: "7011", x: 2226, y: 751, corner: true }
];

const members = [
  { d: "M1680 98H2223", color: "#008000", width: 2 },
  { d: "M1698 243H2223", color: "#008000", width: 2 },
  { d: "M1680 351.500H2041", color: "#00c800", width: 1 },
  { d: "M1680 496.500H2041", color: "#00c800", width: 1 },
  { d: "M1698 605.500H2203", color: "#00ff00", width: 1 },
  { d: "M1680 750.500H2226", color: "#00c800", width: 1 },
  { d: "M1678.500 98V223M1678.500 262V587M1678.500 625V751", color: "#00e000", width: 1 },
  { d: "M1859.500 98V242M1859.500 606V751", color: "#00ff00", width: 1 },
  { d: "M2040.500 98V751", color: "#00b400", width: 1 },
  { d: "M2222 98V587M2222 625V751", color: "#008000", width: 2 }
];

const bubbles = [
  { name: "B", x: 1407, y: 242 },
  { name: "A", x: 1407, y: 606 },
  { name: "1", x: 1680, y: 934 },
  { name: "2", x: 2226, y: 934 }
];

function Plan() {
  return (
    <svg className="absolute inset-0 size-full" fill="none" role="img" aria-label="Plan at 15.300">
      <rect x="1694.500" y="112.500" width="518" height="622" stroke="#4a4ad2" />
      {members.map((m) => (
        <path key={m.d} d={m.d} stroke={m.color} strokeWidth={m.width} />
      ))}
      {joints.map((j) =>
        j.corner ? (
          <circle key={j.name} cx={j.x} cy={j.y} r="4.500" fill="#ff0000" />
        ) : (
          <path
            key={j.name}
            d={`M${j.x - 3.5} ${j.y - 3.5}l7 7m0-7l-7 7`}
            stroke="#ffffff"
            strokeWidth="1.200"
          />
        )
      )}
      <g fill="#d8d8d8" className="font-[Inter,sans-serif] text-[40px] font-thin">
        {joints.map((j) => (
          <text key={j.name} x={j.x + 5} y={j.y - 5}>
            {j.name}
          </text>
        ))}
      </g>
      <path d="M1498 242H1589M1498 606H1589M1680 812V872M2226 812V872" stroke="#855600" strokeWidth="1.500" />
      {bubbles.map((b) => (
        <g key={b.name}>
          <circle cx={b.x} cy={b.y} r="23.500" stroke="#a06800" />
          <text
            x={b.x}
            y={b.y + 14}
            textAnchor="middle"
            fill="#a06800"
            className="font-['Liberation_Sans',sans-serif] text-4xl"
          >
            {b.name}
          </text>
        </g>
      ))}
      <g transform="translate(40 1077)">
        <path d="M0-16c10 2 18 8 20 16H0z" fill="#4a4a4a" />
        <path d="M0 0V-38" stroke="#00a000" strokeWidth="1.500" />
        <path d="M0 0V-20" stroke="#00ff00" strokeWidth="2" />
        <path d="M-5-25h9l-5 8M0-14v8" stroke="#b01010" strokeWidth="1.500" />
        <path d="M0 0h20" stroke="#1a1aff" strokeWidth="3" />
        <path d="M22-24L34 0M34-24L22 0" stroke="#0000a8" strokeWidth="1.500" />
        <circle r="3.500" fill="#ff0000" />
      </g>
    </svg>
  );
}

/* ---------- dialog ---------- */

const pushButton =
  "h-[38px] rounded-[4px] border border-[#d0d0d0] border-b-[#bcbcbc] bg-[#fdfdfd] text-center";
const textBox = "h-[39px] w-[161px] border border-[#e6e6e6] border-b-[#808080] bg-white px-[3px] pb-[9px]";

const jointFields = [
  { id: "joint1", label: "1st Joint", value: "7008" },
  { id: "joint2", label: "2nd Joint (local", value: "7011" },
  { id: "joint3", label: "3rd Joint (local", value: "7004" }
];

interface PickerProps {
  id: string;
  value: string;
  className: string;
}

function Picker({ id, value, className }: PickerProps) {
  return (
    <div className={clsx("relative", className)}>
      <select
        id={id}
        defaultValue={value}
        className="h-8 w-full appearance-none border border-[#d0d0d0] bg-[#fdfdfd] pl-[3px] whitespace-nowrap"
      >
        <option>{value}</option>
      </select>
      <Icon className="pointer-events-none absolute top-3 right-[9px] h-2 w-3" box="0 0 12 8">
        <path d="M1 1l5 5 5-5" stroke="#555555" strokeWidth="1.200" />
      </Icon>
    </div>
  );
}

function Radio({ label, checked = false }: { label: string; checked?: boolean }) {
  return (
    <label className="flex items-center gap-[5px]">
      <input
        type="radio"
        name="mode"
        defaultChecked={checked}
        className="size-5 appearance-none rounded-full border border-[#666666] bg-[#f6f6f6] checked:border-[6px] checked:border-[#005fb8] checked:bg-white"
      />
      {label}
    </label>
  );
}

function SurfaceDialog() {
  return (
    <form
      className={clsx(
        "absolute top-[131px] left-[401px] w-[541px] overflow-hidden rounded-xl bg-[#f0f0f0] pb-[13px] text-[18px] leading-6 text-black outline outline-[#3a3a3a]",
        TAHOMA
      )}
      aria-label="Surface Definition Data"
    >
      <div className="flex h-[50px] items-center bg-[#f3f3f3] pr-[33px] pl-3 text-[#909090]">
        <h2 className="mr-auto font-['Open_Sans',sans-serif] text-xl">Surface Definition Data</h2>
        <div className="flex gap-[65px]">
          <button type="button" aria-label="Minimize dialog">
            <Icon className="size-4" box="0 0 16 16">
              <path d="M0 8.500h16" stroke="#8a8a8a" />
            </Icon>
          </button>
          <button type="button" aria-label="Maximize dialog" disabled>
            <Icon className="size-4" box="0 0 16 16">
              <rect x="1" y="1" width="14" height="14" rx="2" stroke="#dcdcdc" />
            </Icon>
          </button>
          <button type="button" aria-label="Close dialog">
            <Icon className="size-4" box="0 0 16 16">
              <path d="M1 1l14 14M15 1L1 15" stroke="#808080" strokeWidth="1.200" />
            </Icon>
          </button>
        </div>
      </div>

      <fieldset className="mx-[18px] mt-[31px] flex h-[112px] border border-[#dcdcdc] pt-3 pr-[17px] pl-[14px]">
        <div className="flex flex-1 flex-col">
          <div className="flex items-center">
            <label htmlFor="surface" className="w-[103px] pt-0.5">
              Surface
            </label>
            <input id="surface" defaultValue="CELLWT" className={textBox} />
            <button type="button" className={clsx(pushButton, "ml-3 w-[38px] pt-1")}>
              ...
            </button>
          </div>
          <div className="flex gap-8 pt-5">
            <Radio label="Add" />
            <Radio label="Edit" checked />
          </div>
        </div>
        <div className="flex w-[123px] flex-col gap-2">
          <button type="button" className={pushButton}>
            Display
          </button>
          <button type="button" className={pushButton}>
            Delete
          </button>
        </div>
      </fieldset>

      <div className="mt-3 pl-[18px]">
        {jointFields.map((field) => (
          <div key={field.id} className="flex h-10 items-center">
            <label htmlFor={field.id} className="w-[223px] pt-2">
              {field.label}
            </label>
            <input id={field.id} defaultValue={field.value} className={textBox} />
          </div>
        ))}
        <div className="flex h-10 items-center">
          <div className="flex w-[223px] items-center pt-2">
            <label htmlFor="tolerance">Tolerance</label>
            <span className="mx-1 pb-2 text-xs">(m)</span>
            <button type="button" aria-label="Units" className="flex h-6 w-[13px] items-center justify-center border-r-2 border-b-2 border-[#707070] bg-[#f0f0f0]">
              <Icon className="h-1 w-[5px]" box="0 0 5 4">
                <path d="M0 0h5L2.500 3z" fill="#000000" />
              </Icon>
            </button>
          </div>
          <input id="tolerance" defaultValue="0.5" className={textBox} />
        </div>
        <div className="flex h-[38px] items-start">
          <label htmlFor="distribution" className="w-[222px] pt-3">
            Load distribution
          </label>
          <Picker id="distribution" value="Members in local Y direction" className="w-[283px]" />
        </div>
        <div className="flex h-[38px] items-start">
          <label htmlFor="boundary" className="w-[222px] pt-[14px]">
            Boundary
          </label>
          <Picker id="boundary" value="7004" className="w-[163px]" />
        </div>
      </div>

      <div className="mt-[14px] flex gap-[6px] pl-[18px] text-[19px] leading-8 whitespace-nowrap">
        <span>Note:</span>
        <p>
          Surface is unbounded if no boundary joints are
          <br />
          If boundary joints are selected, they must be
          <br />
          in order around the boundary, direction does not
        </p>
      </div>

      <fieldset className="mx-[18px] mt-2 h-[71px] border border-[#dcdcdc] px-[6px]">
        <legend className="px-[3px]">Status</legend>
        <p className="pt-3 pl-[5px] text-[19px] text-[#2c7d2c]">Edit surface ID CELLWT.</p>
      </fieldset>

      <div className="mt-4 grid grid-cols-4 gap-[7px] px-[14px]">
        <button type="reset" className={pushButton}>
          Reset
        </button>
        <button type="button" className={pushButton}>
          OK
        </button>
        <button type="button" className={pushButton}>
          Apply
        </button>
        <button type="button" className={pushButton}>
          Close
        </button>
      </div>
    </form>
  );
}

/* ---------- red notes ---------- */

const noteText =
  "absolute text-[28px] leading-[39px] whitespace-nowrap text-[#ff3a36] font-['Noto_Sans_CJK_SC',sans-serif]";

function Workspace() {
  return (
    <main className="relative mr-1 ml-[3px] flex-1 bg-black">
      <p className="absolute top-5 left-[23px] font-['Liberation_Sans',sans-serif] text-[28px] leading-8 text-white">
        Joint Label: Name
      </p>
      <Plan />
      <SurfaceDialog />
      <p className={clsx(noteText, "top-[178px] left-[538px]")}>命名</p>
      <p className={clsx(noteText, "top-[416px] left-[823px]")}>
        第三个点确定Y，选择一边的两个点后选对边的点即可
        <br />
        影响范围可以给大一些，防止加载未接触
      </p>
      <p className={clsx(noteText, "top-[533px] left-[820px]")}>点击此处后，按住ctrl选择4个角点确定平面范围</p>
      <p className={clsx(noteText, "top-[732px] left-[675px]")}>最后Apply</p>
    </main>
  );
}

function RibbonNotes() {
  return (
    <div className="pointer-events-none absolute inset-0">
      <div className="absolute top-[37px] left-[1161px] h-[65px] w-[186px] border-[7px] border-[#ff3a36]" />
      <div className="absolute top-[138px] left-[1591px] h-16 w-[320px] border-[7px] border-[#ff3a36]" />
      <svg className="absolute top-[91px] left-[1357px] h-20 w-[228px] overflow-visible" aria-hidden="true">
        <path d="M1 1L205 65l2-6 19 17-26 5 2-8z" fill="#ff3a36" />
      </svg>
      <p className={clsx(noteText, "top-[152px] left-[1922px]")}>添加施加平面</p>
    </div>
  );
}

function StatusBar() {
  return (
    <footer className="shrink-0">
      <div className="h-1 border-y border-white bg-[#b0b0b0]" />
      <div className="flex h-[35px] items-center bg-[#2b579a] pt-[3px] pl-[5px] text-[21px] whitespace-nowrap text-white">
        <span className="mr-auto">Ready</span>
        <span className="w-[306px]">Plans\15.300</span>
        <span className="w-[232px]">Version 23.</span>
        <span className="w-[177px]">Current Units: Me</span>
      </div>
      <div className="h-3 border-t-2 border-[#3d494b] bg-[#112b33] pt-1.5 pl-[1362px]">
        <div className="h-1 w-[232px] rounded-t bg-[#2a4249]" />
      </div>
    </footer>
  );
}

export default function App() {
  return (
    <div className="relative flex h-screen flex-col overflow-hidden bg-white font-['Open_Sans',sans-serif]">
      <Gradients />
      <TitleBar />
      <RibbonTabs />
      <Ribbon />
      <Toolbar />
      <DocumentTabs />
      <Workspace />
      <StatusBar />
      <RibbonNotes />
    </div>
  );
}
